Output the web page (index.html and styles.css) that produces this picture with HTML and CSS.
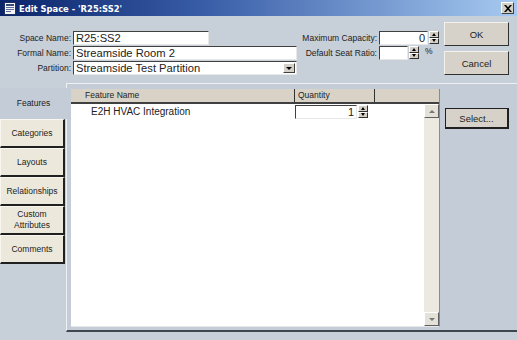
FILE: index.html
```html
<!DOCTYPE html>
<html lang="en">
<head>
    <meta charset="UTF-8">
    <title>Edit Space</title>
    <link rel="stylesheet" href="styles.css">
</head>
<body>
<div class="dialog">
    <div class="titlebar">
        <svg class="app-icon" width="12" height="13" viewBox="0 0 12 13">
            <rect x="0.5" y="0.5" width="11" height="12" fill="#f4f4f4" stroke="#203060"/>
            <rect x="2" y="2" width="8" height="2" fill="#3a4a7a"/>
            <rect x="2" y="5" width="8" height="1" fill="#5a6a9a"/>
            <rect x="2" y="7" width="8" height="1" fill="#5a6a9a"/>
            <rect x="2" y="9" width="5" height="1" fill="#5a6a9a"/>
        </svg>
        <span class="title">Edit Space - 'R25:SS2'</span>
        <span class="close">
            <svg width="8" height="7" viewBox="0 0 8 7"><path d="M0 0h2l2 2.3L6 0h2L5 3.5 8 7H6L4 4.7 2 7H0l3-3.5z" fill="#000"/></svg>
        </span>
    </div>

    <div class="top">
        <div class="fields">
            <label>Space Name:</label>
            <div class="input short">R25:SS2</div>
            <label>Formal Name:</label>
            <div class="input">Streamside Room 2</div>
            <label>Partition:</label>
            <div class="input select">Streamside Test Partition
                <span class="drop"><i class="tri-down"></i></span>
            </div>
        </div>

        <div class="capacity">
            <label>Maximum Capacity:</label>
            <div class="num-wrap">
                <div class="input num wide">0</div>
                <div class="spin"><span><i class="tri-up"></i></span><span><i class="tri-down"></i></span></div>
            </div>
            <label>Default Seat Ratio:</label>
            <div class="num-wrap">
                <div class="input num small"></div>
                <div class="spin"><span><i class="tri-up"></i></span><span><i class="tri-down"></i></span></div>
                <span class="pct">%</span>
            </div>
        </div>

        <div class="buttons">
            <button class="btn big">OK</button>
            <button class="btn big">Cancel</button>
        </div>
    </div>

    <div class="main">
        <div class="tabs">
            <div class="tab active">Features</div>
            <div class="tab">Categories</div>
            <div class="tab">Layouts</div>
            <div class="tab">Relationships</div>
            <div class="tab">Custom<br>Attributes</div>
            <div class="tab">Comments</div>
        </div>

        <div class="panel">
            <div class="grid">
                <div class="grid-head">
                    <div class="col-name">Feature Name</div>
                    <div class="col-qty">Quantity</div>
                    <div class="col-rest"></div>
                </div>
                <div class="grid-body">
                    <div class="rows">
                        <div class="row">
                            <div class="cell-name">E2H HVAC Integration</div>
                            <div class="cell-qty">
                                <div class="input num qty">1</div>
                                <div class="spin"><span><i class="tri-up"></i></span><span><i class="tri-down"></i></span></div>
                            </div>
                        </div>
                    </div>
                    <div class="scrollbar">
                        <span class="arrow"><i class="tri-up"></i></span>
                        <span class="track"></span>
                        <span class="arrow"><i class="tri-down"></i></span>
                    </div>
                </div>
            </div>
            <div class="side">
                <button class="btn select">Select...</button>
            </div>
        </div>
    </div>
</div>
</body>
</html>
```

FILE: styles.css
```css
body {
    margin: 0;
    background: #c7cfd8;
    font-family: "Liberation Sans", Arial, sans-serif;
    font-size: 8.5px;
    color: #222;
}

.dialog {
    width: 517px;
    height: 340px;
    display: flex;
    flex-direction: column;
    overflow: hidden;
}

/* title bar */
.titlebar {
    height: 16px;
    display: flex;
    align-items: center;
    background: linear-gradient(to right, #0a246a 0%, #3a5ea8 40%, #a6caf0 100%);
    padding: 0 3px 0 4px;
}

.app-icon {
    flex: none;
}

.title {
    margin-left: 3px;
    color: #fff;
    font-family: "DejaVu Sans Condensed", "DejaVu Sans", sans-serif;
    font-weight: bold;
    font-size: 9.3px;
}

.close {
    margin-left: auto;
    width: 11px;
    height: 10px;
    background: #d4d0c8;
    border: 1px solid;
    border-color: #fff #404040 #404040 #fff;
    display: flex;
    align-items: center;
    justify-content: center;
}

/* top form */
.top {
    height: 67px;
    display: flex;
}

.fields {
    display: grid;
    grid-template-columns: 73px 224px;
    grid-auto-rows: 15px;
    align-content: start;
    padding-top: 15px;
}

.fields label,
.capacity label {
    text-align: right;
    padding-right: 2px;
    line-height: 15px;
}

.input {
    height: 13px;
    background: #fff;
    border-top: 1px solid #404040;
    border-left: 1px solid #404040;
    border-bottom: 1px solid #e8e8e8;
    border-right: 1px solid #e8e8e8;
    font-size: 11.2px;
    line-height: 13px;
    padding-left: 2px;
    white-space: nowrap;
    overflow: hidden;
    box-sizing: content-box;
}

.fields .input {
    margin-bottom: 1px;
    height: 12px;
    line-height: 13px;
}

.input.short {
    width: 132px;
}

.input.select {
    position: relative;
}

.drop {
    position: absolute;
    right: 1px;
    top: 1px;
    width: 12px;
    height: 10px;
    background: #d4d0c8;
    border: 1px solid;
    border-color: #fff #404040 #404040 #fff;
    box-sizing: border-box;
    display: flex;
    align-items: center;
    justify-content: center;
}

.tri-down,
.tri-up {
    display: block;
    width: 0;
    height: 0;
    border-left: 3px solid transparent;
    border-right: 3px solid transparent;
}

.tri-down {
    border-top: 3px solid #000;
}

.tri-up {
    border-bottom: 3px solid #000;
}

.capacity {
    display: grid;
    grid-template-columns: 82px auto;
    grid-auto-rows: 15px;
    align-content: start;
    padding-top: 15px;
}

.num-wrap {
    display: flex;
    align-items: flex-start;
}

.input.num {
    text-align: right;
    padding: 0 2px 0 0;
    font-size: 11px;
    height: 12px;
}

.input.wide {
    width: 45px;
}

.input.small {
    width: 25px;
}

.spin {
    width: 10px;
    height: 13px;
    display: flex;
    flex-direction: column;
    margin-left: 1px;
}

.spin span {
    flex: 1;
    background: #d4d0c8;
    border: 1px solid;
    border-color: #fff #303030 #303030 #fff;
    display: flex;
    align-items: center;
    justify-content: center;
}

.spin .tri-up,
.spin .tri-down {
    border-left-width: 2.5px;
    border-right-width: 2.5px;
}

.pct {
    margin-left: 6px;
    line-height: 11px;
}

.buttons {
    display: flex;
    flex-direction: column;
    gap: 5px;
    padding-top: 6px;
    margin-left: 5px;
}

.btn {
    font-family: "Liberation Sans", Arial, sans-serif;
    font-size: 9.5px;
    color: #222;
    background: #d6d2c9;
    border: 1px solid;
    border-color: #f4f2ee #303030 #303030 #f4f2ee;
    padding: 0;
}

.btn.big {
    width: 65px;
    height: 24px;
}

/* main area */
.main {
    flex: 1;
    display: flex;
}

.tabs {
    width: 66px;
    flex: none;
    padding-top: 5px;
    display: flex;
    flex-direction: column;
}

.tab {
    height: 29px;
    background: #ece9dc;
    border: 1px solid;
    border-color: #f8f6ee #202020 #202020 #f8f6ee;
    border-bottom-width: 2px;
    border-right-width: 2px;
    display: flex;
    align-items: center;
    justify-content: center;
    text-align: center;
    line-height: 11px;
    box-sizing: border-box;
    margin-right: 1px;
}

.tab.active {
    background: #c4cdd7;
    border-color: transparent;
    height: 31px;
    margin-right: -2px;
    position: relative;
}

.panel {
    flex: 1;
    height: 249px;
    border-top: 1px solid #eef1f4;
    border-left: 1px solid #eef1f4;
    border-bottom: 2px solid #40464e;
    background: #c4cdd7;
    display: flex;
    padding: 5px 0 0 4px;
    box-sizing: border-box;
}

.grid {
    width: 368px;
    height: 237px;
    display: flex;
    flex-direction: column;
    background: #fff;
    border-right: 1px solid #8a8a8a;
    border-bottom: 1px solid #e6e6e6;
}

.grid-head {
    height: 13px;
    flex: none;
    display: flex;
    background: #d8d3c6;
    border-bottom: 2px solid #404040;
}

.grid-head > div {
    line-height: 13px;
}

.col-name {
    width: 209px;
    padding-left: 14px;
    border-right: 1px solid #303030;
}

.col-qty {
    width: 76px;
    padding-left: 3px;
    border-right: 1px solid #303030;
}

.grid-body {
    flex: 1;
    display: flex;
}

.rows {
    flex: 1;
}

.row {
    display: flex;
    height: 15px;
    align-items: center;
}

.cell-name {
    width: 204px;
    padding-left: 20px;
    font-size: 10px;
}

.cell-qty {
    display: flex;
    align-items: flex-start;
    margin-top: 1px;
}

.input.qty {
    width: 58px;
}

.scrollbar {
    width: 15px;
    display: flex;
    flex-direction: column;
    background: #ebe9e0;
}

.scrollbar .track {
    flex: 1;
}

.scrollbar .arrow {
    height: 14px;
    background: #e4e1d8;
    border: 1px solid;
    border-color: #fff #606060 #606060 #fff;
    box-sizing: border-box;
    display: flex;
    align-items: center;
    justify-content: center;
}

.scrollbar .tri-up,
.scrollbar .tri-down {
    border-top-color: #777;
    border-bottom-color: #777;
}

.side {
    padding: 19px 0 0 5px;
}

.btn.select {
    width: 64px;
    height: 21px;
    border: 2px solid #202020;
    border-top-width: 1px;
    border-left-width: 1px;
}
```
